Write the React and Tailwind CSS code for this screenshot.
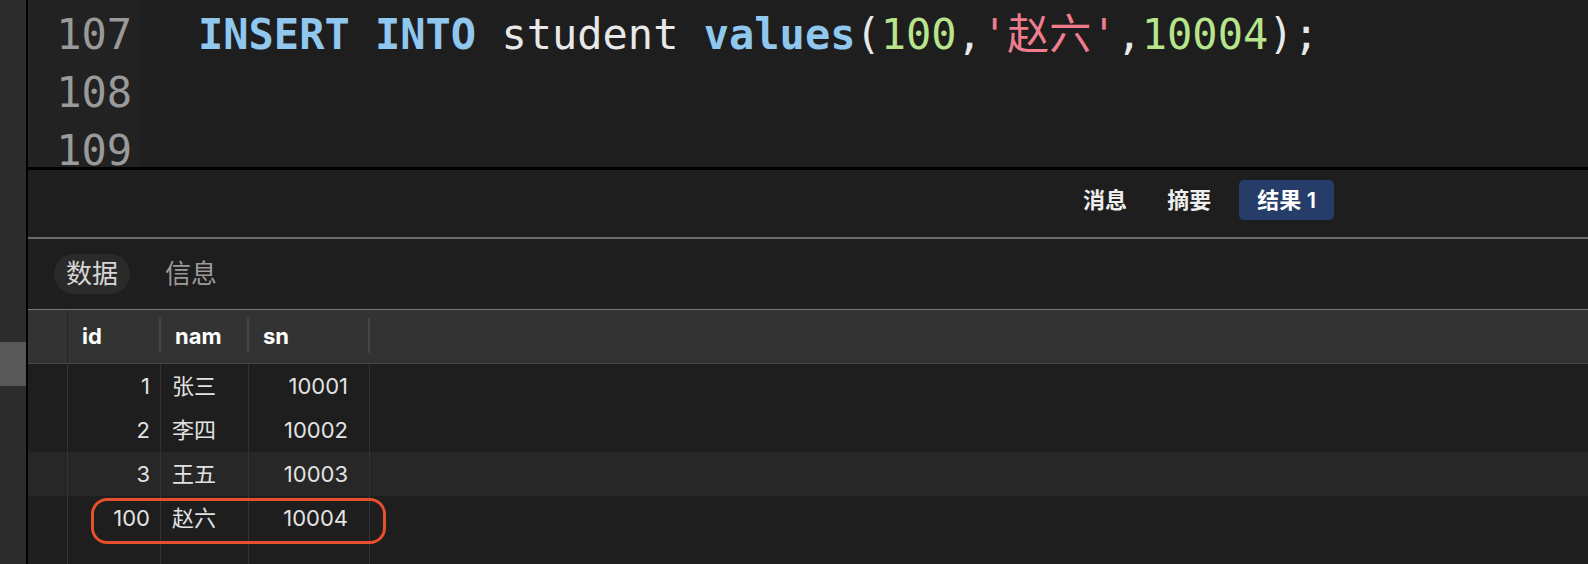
import React from "react";

const rows = [
  { id: 1, name: "张三", sn: 10001 },
  { id: 2, name: "李四", sn: 10002 },
  { id: 3, name: "王五", sn: 10003 },
  { id: 100, name: "赵六", sn: 10004 },
];

const cjk = { fontFamily: "Inter, 'Noto Sans CJK SC', sans-serif" };
const mono = { fontFamily: "'DejaVu Sans Mono', 'Noto Sans CJK SC', monospace" };

const CodeEditor = () => (
  <div className="flex h-[167px] shrink-0 overflow-hidden text-[42px] leading-[58px]" style={mono}>
    <div className="w-[112px] shrink-0 bg-[#222222] pt-[6px] pr-[8px] text-right text-[#9a9a9a]">
      <div>107</div>
      <div>108</div>
      <div>109</div>
    </div>
    <div className="flex-1 whitespace-pre pt-[6px] pl-[58px] text-[#e8e8e8]">
      <div>
        <span className="font-bold text-[#8fc7ee]">INSERT INTO</span> student{" "}
        <span className="font-bold text-[#8fc7ee]">values</span>(
        <span className="text-[#b8e58b]">100</span>,
        <span className="text-[#ef7d8d]">'赵六'</span>,
        <span className="text-[#b8e58b]">10004</span>);
      </div>
    </div>
  </div>
);

const ResultTabs = () => (
  <div className="flex h-[67px] shrink-0 items-start justify-end gap-[22px] pt-[10px] pr-[254px] text-[22px] font-semibold text-[#eeeeee]" style={cjk}>
    <span className="px-[18px] leading-[40px]">消息</span>
    <span className="leading-[40px]">摘要</span>
    <span className="ml-[6px] rounded-[5px] bg-[#263d69] px-[18px] leading-[40px] text-white">结果 1</span>
  </div>
);

const SubTabs = () => (
  <div className="flex h-[70px] shrink-0 items-start gap-[23px] pt-[15px] pl-[26px] text-[26px]" style={cjk}>
    <span className="rounded-full bg-[#2a2a2a] px-[12px] leading-[40px] text-[#d6d6d6]">数据</span>
    <span className="px-[12px] leading-[40px] text-[#9a9a9a]">信息</span>
  </div>
);

const HeaderCell = ({ label, w }) => (
  <div className={`relative flex items-center pl-[14px] ${w}`}>
    {label}
    <span className="absolute right-0 top-[8px] h-[35px] w-[2px] bg-[#454545]" />
  </div>
);

const Grid = () => (
  <div className="shrink-0 text-[22px]" style={cjk}>
    <div className="h-px bg-[#7a7a7a]" />
    <div className="flex h-[53px] bg-[#333333] font-bold text-white">
      <div className="w-[40px] shrink-0 border-r border-[#262626]" />
      <HeaderCell label="id" w="w-[93px]" />
      <HeaderCell label="nam" w="w-[88px]" />
      <HeaderCell label="sn" w="w-[121px]" />
      <div className="flex-1" />
    </div>
    <div className="h-px bg-[#444444]" />
    {[...rows, null].map((r, i) => (
      <div key={i} className={`flex h-[44px] text-[#e2e2e2] ${i === 2 ? "bg-[#272727]" : ""}`}>
        <div className="w-[40px] shrink-0 border-r border-[#333333]" />
        <div className="flex w-[93px] items-center justify-end border-r border-[#333333] pr-[10px]">{r?.id}</div>
        <div className="flex w-[88px] items-center border-r border-[#333333] pl-[11px]">{r?.name}</div>
        <div className="flex w-[121px] items-center justify-end border-r border-[#333333] pr-[21px]">{r?.sn}</div>
        <div className="flex-1" />
      </div>
    ))}
  </div>
);

export default function App() {
  return (
    <div className="relative flex h-[564px] w-[1588px] overflow-hidden bg-[#1e1e1e]">
      <div className="flex w-[26px] shrink-0 flex-col bg-[#2c2c2c]">
        <div className="h-[342px] shrink-0" />
        <div className="h-[44px] shrink-0 bg-[#585858]" />
      </div>
      <div className="w-[2px] shrink-0 bg-black" />
      <div className="flex min-w-0 flex-1 flex-col">
        <CodeEditor />
        <div className="h-[3px] shrink-0 bg-black" />
        <ResultTabs />
        <div className="h-[2px] shrink-0 bg-[#6a6a6a]" />
        <SubTabs />
        <Grid />
      </div>
      <div className="absolute left-[91px] top-[498px] h-[46px] w-[295px] rounded-[16px] border-[3px] border-[#e6502c]" />
    </div>
  );
}
